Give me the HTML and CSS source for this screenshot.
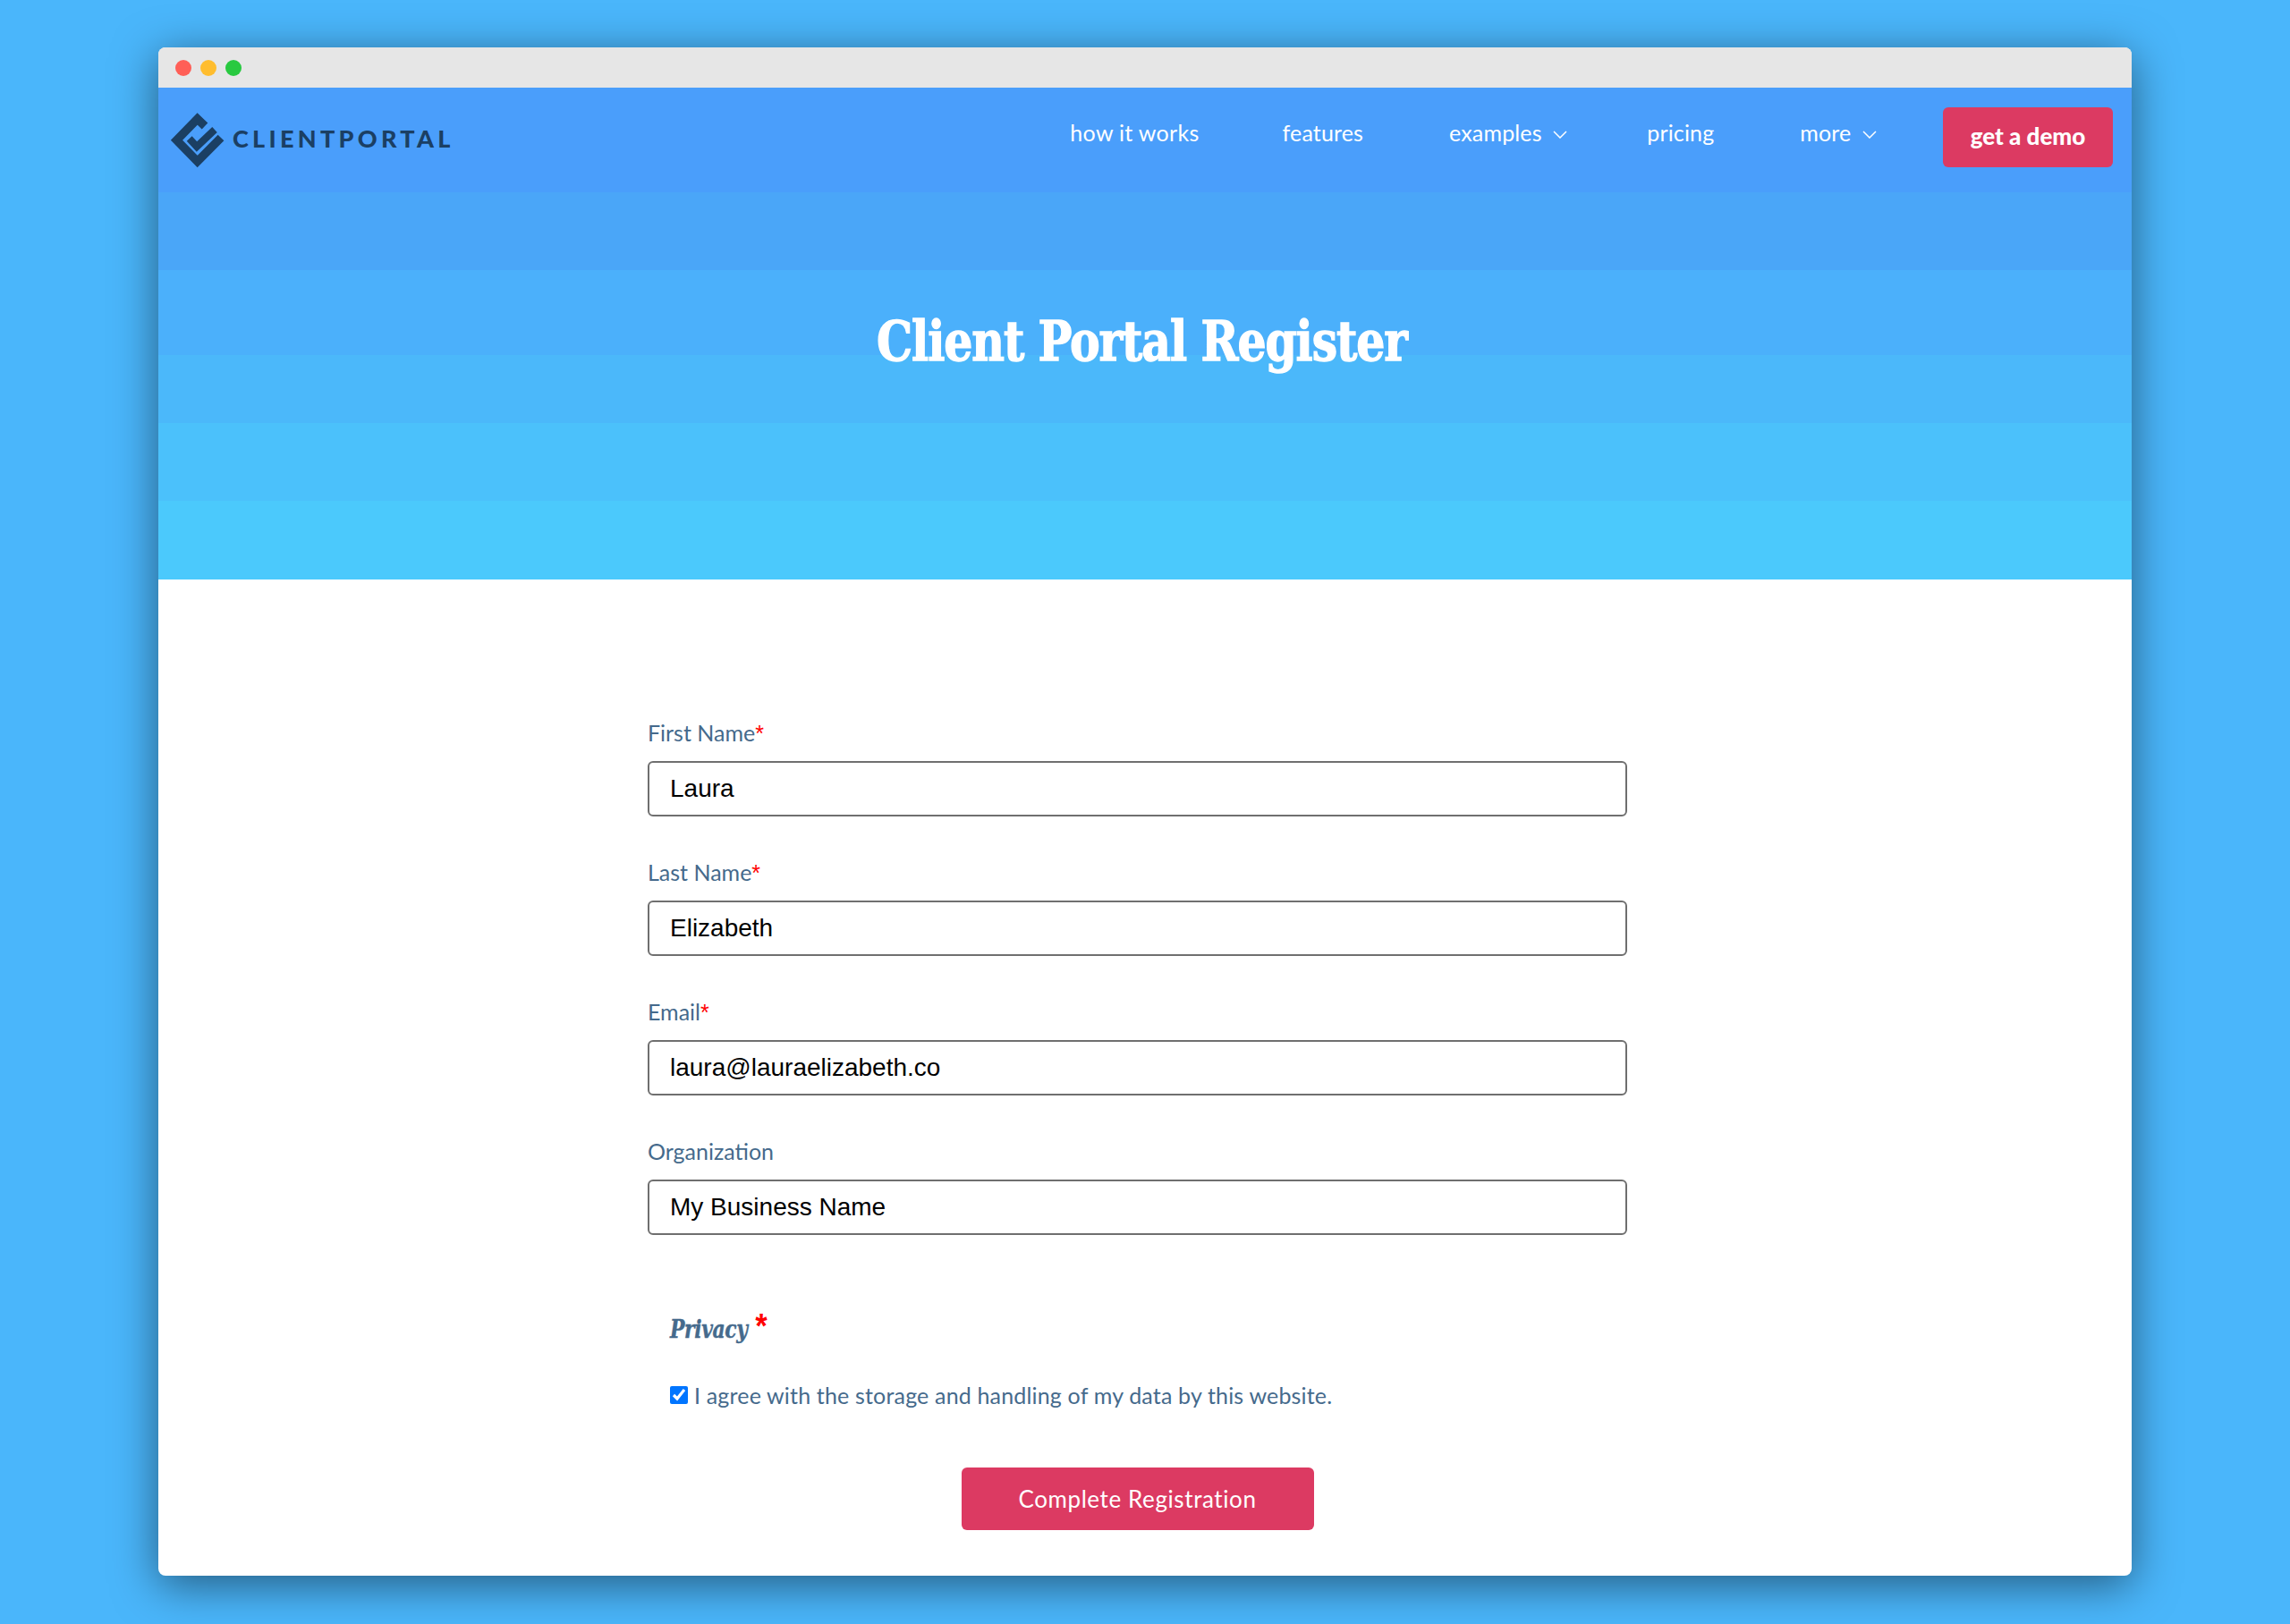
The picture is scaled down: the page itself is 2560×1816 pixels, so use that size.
FILE: index.html
```html
<!DOCTYPE html>
<html lang="en">
<head>
<meta charset="utf-8">
<title>Client Portal Register</title>
<link rel="stylesheet" href="styles.css">
</head>
<body>
<div class="window">
  <div class="titlebar">
    <span class="dot dot-red"></span>
    <span class="dot dot-yellow"></span>
    <span class="dot dot-green"></span>
  </div>
  <header class="nav">
    <a class="logo">
      <svg class="logo-mark" viewBox="0 0 62 62" width="62" height="62">
        <path d="M39 15 L30.7 7 L7.5 30.7 L30.7 54.5 L57 28" fill="none" stroke="#1b3f63" stroke-width="9.5"/>
        <path d="M21.7 29 L30 38 L50 19" fill="none" stroke="#1b3f63" stroke-width="8"/>
      </svg>
      <span class="logo-text">CLIENTPORTAL</span>
    </a>
    <nav class="links">
      <a class="link link-first">how it works</a>
      <a class="link">features</a>
      <a class="link link-menu">examples <svg class="chev" viewBox="0 0 16 9" width="16" height="9"><path d="M1 1 L8 8 L15 1" fill="none" stroke="#fff" stroke-width="1.5"/></svg></a>
      <a class="link">pricing</a>
      <a class="link link-menu">more <svg class="chev" viewBox="0 0 16 9" width="16" height="9"><path d="M1 1 L8 8 L15 1" fill="none" stroke="#fff" stroke-width="1.5"/></svg></a>
    </nav>
    <a class="demo">get a demo</a>
  </header>
  <section class="hero">
    <div class="band band-1"></div>
    <div class="band band-2"></div>
    <div class="band band-3"></div>
    <div class="band band-4"></div>
    <div class="band band-5"></div>
    <h1 class="title">Client Portal Register</h1>
  </section>
  <main class="content">
    <form class="form">
      <div class="field">
        <label class="label">First Name<span class="req">*</span></label>
        <input class="input" type="text" value="Laura">
      </div>
      <div class="field">
        <label class="label">Last Name<span class="req">*</span></label>
        <input class="input" type="text" value="Elizabeth">
      </div>
      <div class="field">
        <label class="label">Email<span class="req">*</span></label>
        <input class="input" type="text" value="laura@lauraelizabeth.co">
      </div>
      <div class="field">
        <label class="label">Organization</label>
        <input class="input" type="text" value="My Business Name">
      </div>
      <div class="privacy">
        <h2 class="privacy-title">Privacy <span class="req">*</span></h2>
        <label class="agree"><input class="check" type="checkbox" checked> I agree with the storage and handling of my data by this website.</label>
      </div>
      <div class="actions">
        <button class="submit" type="button">Complete Registration</button>
      </div>
    </form>
  </main>
</div>
</body>
</html>
```
FILE: styles.css
```css
* { box-sizing: border-box; }
html, body { margin: 0; height: 100%; }
body {
  background: #4ab6fb;
  padding-top: 53px;
  font-family: "Lato", "Noto Sans", sans-serif;
}
.window {
  width: 2206px;
  height: 1709px;
  margin-left: 177px;
  border-radius: 8px;
  background: #fff;
  box-shadow: 0 10px 50px rgba(0,0,0,.5);
  position: relative;
}
.titlebar {
  height: 45px;
  background: #e6e6e6;
  border-radius: 8px 8px 0 0;
  display: flex;
  align-items: center;
  gap: 10px;
  padding: 1px 0 0 19px;
}
.dot { width: 18px; height: 18px; border-radius: 50%; }
.dot-red { background: #ff5f57; }
.dot-yellow { background: #ffbd2e; }
.dot-green { background: #28c940; }
.nav {
  height: 117px;
  background: #4a9efb;
  display: flex;
  align-items: flex-start;
}
.logo {
  display: flex;
  align-items: center;
  margin: 28px 0 0 13px;
}
.logo-text {
  font-family: "Lato", sans-serif;
  font-weight: 900;
  font-size: 27px;
  letter-spacing: 4.3px;
  color: #1b3f63;
  margin: 0 0 5px 8px;
}
.links {
  display: flex;
  gap: 96px;
  margin-left: auto;
  margin-top: 33px;
}
.link {
  font-size: 25px;
  letter-spacing: .15px;
  color: #fff;
  line-height: 34px;
  white-space: nowrap;
}
.link-first { letter-spacing: .3px; margin-right: -3px; }
.link-menu { margin-right: -7px; }
.chev { margin-left: 6px; vertical-align: 3px; }
.demo {
  width: 190px;
  height: 67px;
  margin: 22px 21px 0 81px;
  padding-bottom: 4px;
  background: #dc3a62;
  border-radius: 6px;
  color: #fff;
  font-weight: 900;
  font-size: 26px;
  display: flex;
  align-items: center;
  justify-content: center;
}
.hero {
  height: 433px;
  display: flex;
  flex-direction: column;
  position: relative;
}
.band { flex: none; }
.band-1 { height: 87px; background: #4aa6f8; }
.band-2 { height: 95px; background: #4bb0fb; }
.band-3 { height: 76px; background: #4bb8fa; }
.band-4 { height: 87px; background: #4bc1fb; }
.band-5 { height: 88px; background: #4bc9fc; }
.title {
  position: absolute;
  left: 0;
  right: 0;
  top: 131px;
  margin: 0;
  text-align: center;
  color: #fff;
  font-family: "DejaVu Serif Condensed", "DejaVu Serif", serif;
  font-weight: 700;
  font-size: 62px;
  letter-spacing: -1.2px;
  line-height: 72px;
  padding-right: 8px;
  -webkit-text-stroke: 1.3px #fff;
  transform: scaleX(.905);
}
.content { padding: 154px 0 0 547px; }
.form { width: 1095px; }
.field { margin-bottom: 45px; }
.label {
  display: block;
  font-size: 25px;
  line-height: 34px;
  color: #456a8c;
  margin-bottom: 15px;
}
.req { color: #f00; font-family: "Liberation Sans", sans-serif; line-height: 1; }
.input {
  display: block;
  width: 100%;
  height: 62px;
  border: 2px solid #6f6f6f;
  border-radius: 6px;
  padding: 0 23px;
  background: #fff;
  font-family: "Liberation Sans", Arial, sans-serif;
  font-size: 28px;
  color: #000;
  outline: none;
}
.privacy { padding: 0 0 0 25px; margin-top: 86px; }
.privacy-title {
  margin: 0;
  font-family: "DejaVu Serif Condensed", "DejaVu Serif", serif;
  font-style: italic;
  font-weight: 700;
  font-size: 27px;
  line-height: 40px;
  letter-spacing: -.4px;
  color: #456a8c;
  -webkit-text-stroke: .4px #456a8c;
  transform: scaleX(.9);
  transform-origin: left center;
}
.privacy-title .req { font-size: 38px; line-height: 20px; -webkit-text-stroke: 0; }
.agree {
  display: flex;
  align-items: center;
  gap: 7px;
  margin-top: 36px;
  font-size: 25px;
  letter-spacing: .17px;
  line-height: 34px;
  color: #456a8c;
}
.check {
  width: 20px;
  height: 20px;
  margin: 0;
  accent-color: #0075ff;
}
.actions { display: flex; justify-content: center; margin-top: 64px; }
.submit {
  width: 394px;
  height: 70px;
  border: 0;
  border-radius: 6px;
  background: #dc3a62;
  color: #fff;
  font-family: "Lato", sans-serif;
  font-size: 26px;
  letter-spacing: .6px;
}
```
